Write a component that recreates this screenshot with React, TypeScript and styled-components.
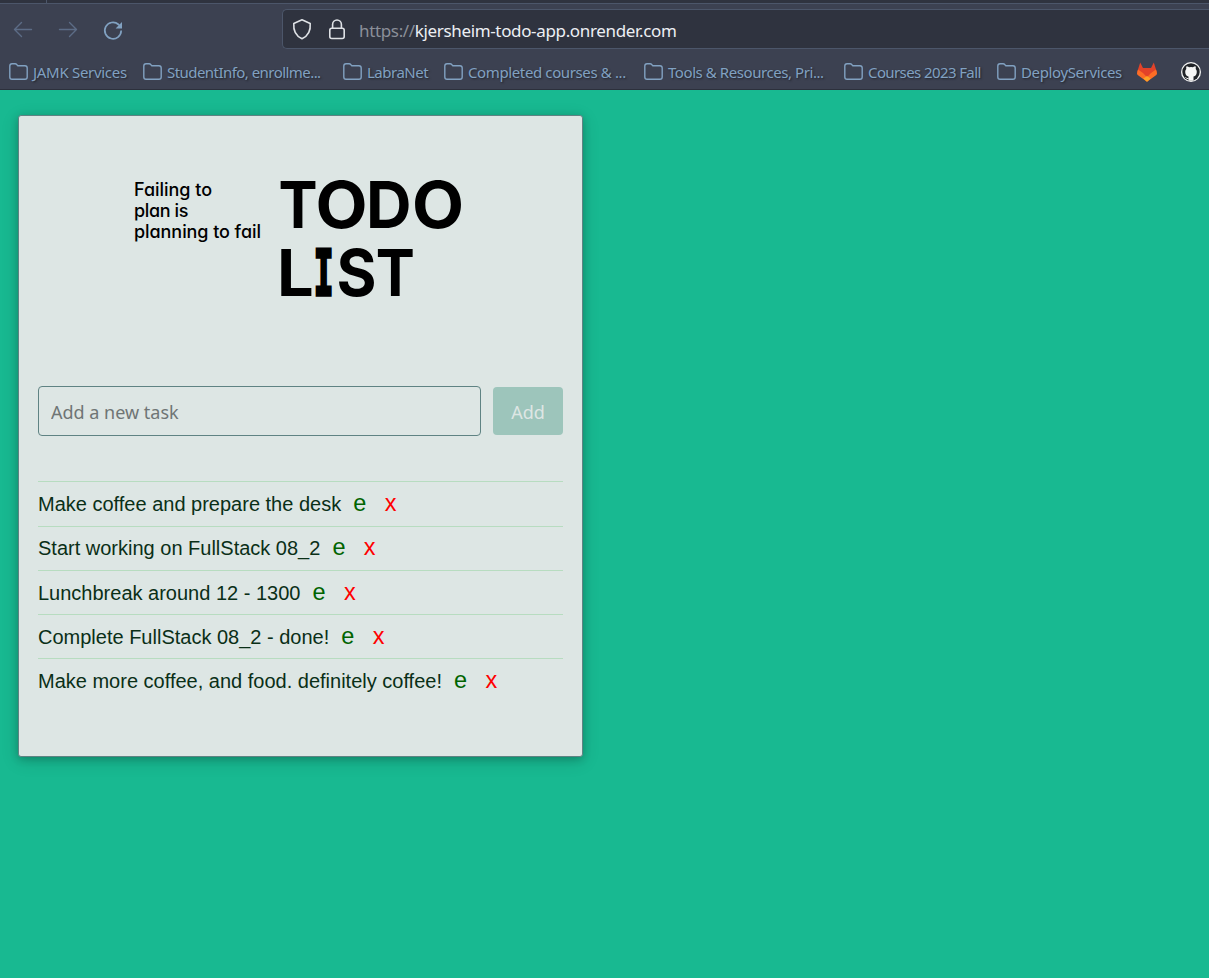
import React from "react";
import styled, { createGlobalStyle } from "styled-components";

const Global = createGlobalStyle`
  * { box-sizing: border-box; }
  html, body { margin: 0; padding: 0; background: #18b991; }
  body { overflow: hidden; font-family: "Liberation Sans", Arial, sans-serif; }
`;

const Window = styled.div`
  height: 978px;
  display: flex;
  flex-direction: column;
  overflow: hidden;
`;

const Chrome = styled.header`
  height: 90px;
  flex: none;
  background: #3c4151;
  border-bottom: 1px solid #2c303c;
  font-family: "Noto Sans", "Open Sans", sans-serif;
`;

const TabStrip = styled.div`
  height: 4px;
  background: #2f333f;
  border-bottom: 1px solid #4c566a;
`;

const Tab = styled.div`
  width: 47px;
  height: 3px;
  border-right: 1px solid #4c566a;
`;

const NavRow = styled.div`
  height: 50px;
  padding-top: 5px;
  display: flex;
`;

const NavButtons = styled.div`
  width: 282px;
  height: 40px;
  padding: 2px 0 0 11px;
  display: flex;
  align-items: center;
  gap: 21px;
`;

const AddressBar = styled.div`
  flex: 1;
  height: 40px;
  display: flex;
  align-items: center;
  background: #2f333f;
  border: 1px solid #4c566a;
  border-right: 0;
  border-radius: 5px 0 0 5px;
  padding-left: 7px;
`;

const BarIcon = styled.svg`
  width: 24px;
  height: 24px;
  margin-right: 11px;
  flex: none;
`;

const Url = styled.div`
  margin: 3px 0 0 -1px;
  font-size: 17px;
  line-height: 24px;
  letter-spacing: -0.35px;
  color: #eceff4;
  white-space: nowrap;
`;

const Scheme = styled.span`
  color: #8b8f99;
`;

const Bookmarks = styled.nav`
  height: 35px;
  padding-left: 9px;
  display: flex;
  align-items: center;
`;

const Bookmark = styled.div`
  display: flex;
  align-items: center;
  gap: 5px;
  margin-right: 16px;
`;

const BookmarkLabel = styled.span<{ $width: number; $spacing: number }>`
  width: ${(p) => p.$width}px;
  font-size: 15px;
  line-height: 20px;
  letter-spacing: ${(p) => p.$spacing}px;
  white-space: nowrap;
  color: #81a1c1;
  text-shadow: 1px 1px 2px #20232c;
  padding-top: 1px;
`;

const SiteIcon = styled.svg`
  flex: none;
  margin: 0 25px 0 -1px;
`;

const Page = styled.main`
  flex: 1;
  padding: 25px 0 0 18px;
`;

const Card = styled.section`
  width: 565px;
  height: 642px;
  padding: 0 19px;
  background: #dde6e4;
  border: 1px solid #5f8383;
  border-radius: 3px;
  box-shadow: 0 2px 8px rgba(0, 0, 0, 0.2), 0 4px 18px rgba(0, 0, 0, 0.14);
`;

const Banner = styled.svg`
  display: block;
  width: 525px;
  height: 270px;
`;

const Slogan = styled.g`
  font: 500 18px Inter, sans-serif;
  font-feature-settings: "cv11";
`;

const Title = styled.g`
  font: 700 65px Inter, sans-serif;
`;

const SlabLetter = styled.text`
  font: 700 62px "DejaVu Sans Mono", monospace;
  stroke: #000;
  stroke-width: 2.6px;
  vector-effect: non-scaling-stroke;
`;

const TaskForm = styled.form`
  display: flex;
  align-items: center;
  gap: 12px;
  margin-bottom: 45.25px;
`;

const TaskInput = styled.input`
  width: 443px;
  height: 50px;
  padding: 2px 12px 0;
  border: 1px solid #5f8383;
  border-radius: 4px;
  background: transparent;
  font: 18px "Noto Sans", sans-serif;
  &::placeholder { color: #6f7575; opacity: 1; }
`;

const AddButton = styled.button`
  width: 70px;
  height: 48px;
  padding: 2px 0 0;
  border: 0;
  border-radius: 4px;
  background: #9dc5bb;
  color: #dde6e4;
  font: 18px "Noto Sans", sans-serif;
`;

const Tasks = styled.ul`
  list-style: none;
  margin: 0;
  padding: 0;
`;

const Task = styled.li`
  height: 44.25px;
  display: flex;
  align-items: baseline;
  border-top: 1px solid #b7dcc0;
  padding-top: 6.9px;
  font-size: 20px;
  line-height: 28px;
  color: #0a2f17;
  white-space: nowrap;
`;

const Action = styled.span<{ $color: string; $gap: number }>`
  margin-left: ${(p) => p.$gap}px;
  font-size: 23.5px;
  color: ${(p) => p.$color};
`;

const bookmarks = [
  { label: "JAMK Services", width: 94, spacing: -0.3 },
  { label: "StudentInfo, enrollme...", width: 160, spacing: -0.55 },
  { label: "LabraNet", width: 61, spacing: -0.5 },
  { label: "Completed courses & ...", width: 160, spacing: -0.38 },
  { label: "Tools & Resources, Pri...", width: 160, spacing: -0.43 },
  { label: "Courses 2023 Fall", width: 113, spacing: -0.6 },
  { label: "DeployServices", width: 101, spacing: -0.38 },
];

const tasks = [
  "Make coffee and prepare the desk",
  "Start working on FullStack 08_2",
  "Lunchbreak around 12 - 1300",
  "Complete FullStack 08_2 - done!",
  "Make more coffee, and food. definitely coffee!",
];

const Folder = () => (
  <svg width="19" height="18" viewBox="0 0 19 18" fill="none" stroke="#81a1c1" strokeWidth="1.4">
    <path d="M.8 14V3Q.8.8 3 .8h3.2q.9 0 1.5.7l1.1 1.2h7.2q2.2 0 2.2 2.2V14q0 2.2-2.2 2.2H3Q.8 16.2.8 14Z" />
  </svg>
);

const Arrow = ({ flip }: { flip?: boolean }) => (
  <svg width="24" height="24" viewBox="0 0 24 24" fill="none" stroke="#5c6c86" strokeWidth="1.4" strokeLinecap="round" strokeLinejoin="round">
    <path d={flip ? "M3.5 11.5h17M13.5 4.5l7 7-7 7" : "M20.5 11.5h-17M10.5 4.5l-7 7 7 7"} />
  </svg>
);

const Letter = ({ x, y, scale, children }: { x: number; y: number; scale: number; children: string }) => (
  <text transform={`translate(${x} ${y}) scale(${scale} 1)`}>{children}</text>
);

export default function App() {
  return (
    <Window>
      <Global />
      <Chrome>
        <TabStrip><Tab /></TabStrip>
        <NavRow>
          <NavButtons>
            <Arrow />
            <Arrow flip />
            <svg width="24" height="24" viewBox="0 0 24 24" fill="none">
              <path d="M20.2 12.6A8.2 8.2 0 1 1 17.5 6.5L20 9" stroke="#81a1c1" strokeWidth="1.7" />
              <path d="M21 4v6.4h-6.4Z" fill="#81a1c1" />
            </svg>
          </NavButtons>
          <AddressBar>
            <BarIcon viewBox="0 0 24 24" fill="none" stroke="#dfe2e6" strokeWidth="1.6" strokeLinejoin="round">
              <path d="M12 2.8 20.2 6.4c.5 5.7-1.5 12.3-8.2 15.4C5.3 18.7 3.3 12.1 3.8 6.4Z" />
            </BarIcon>
            <BarIcon viewBox="0 0 24 24" fill="none" stroke="#dfe2e6" strokeWidth="1.6">
              <rect x="4.8" y="11.3" width="14.4" height="10.2" rx="2" />
              <path d="M7.6 11.2V7.4a4.4 4.4 0 0 1 8.8 0v3.8" />
            </BarIcon>
            <Url><Scheme>https://</Scheme>kjersheim-todo-app.onrender.com</Url>
          </AddressBar>
        </NavRow>
        <Bookmarks>
          {bookmarks.map((b) => (
            <Bookmark key={b.label}>
              <Folder />
              <BookmarkLabel $width={b.width} $spacing={b.spacing}>{b.label}</BookmarkLabel>
            </Bookmark>
          ))}
          <SiteIcon width="20" height="20" viewBox="0 0 20 20">
            <path d="M3.2.4 6 6h8L16.8.4 19.8 10 10 19.6.2 10Z" fill="#e24329" />
            <path d="M0 11 1 7.6 6 11l4 4.2 4-4.2 5-3.4 1 3.4q.1 1.5-1 2.3L10 19.8 1 13.3Q-.1 12.5 0 11Z" fill="#fc6d26" />
            <path d="m6.3 16.6 3.7-2.6 3.7 2.6-3.7 3.2Z" fill="#fca326" />
          </SiteIcon>
          <SiteIcon width="20" height="20" viewBox="0 0 20 20">
            <circle cx="10" cy="10" r="10" fill="#f5f5f5" />
            <circle cx="10" cy="10" r="8.7" fill="#202328" />
            <path d="M7.5 18.5v-4Q4.2 13.8 4.2 9.7q0-1.7 1.1-2.8-.4-1.3.2-2.7 1.3 0 2.6 1 1.9-.5 3.8 0 1.3-1 2.6-1 .6 1.4.2 2.7 1.1 1.1 1.1 2.8 0 4.1-3.3 4.8v4Q10 19.1 7.5 18.5Z" fill="#f5f5f5" />
            <path d="M7.5 16.6q-2.1.4-3-1.4" stroke="#f5f5f5" fill="none" />
          </SiteIcon>
        </Bookmarks>
      </Chrome>
      <Page>
        <Card>
          <Banner viewBox="38 116 525 270">
            <Slogan>
              <text x="134" y="195.5" textLength="78">Failing to</text>
              <text x="134" y="216.5" textLength="54.5">plan is</text>
              <text x="134" y="237.5" textLength="127">planning to fail</text>
            </Slogan>
            <Title>
              <Letter x={278.5} y={227.5} scale={0.9}>T</Letter>
              <Letter x={315.5} y={227.5} scale={1.04}>O</Letter>
              <Letter x={366} y={227.5} scale={0.97}>D</Letter>
              <Letter x={412} y={227.5} scale={1.04}>O</Letter>
              <Letter x={277} y={295.5} scale={1}>L</Letter>
              <SlabLetter transform="translate(313.7 294.6) scale(0.53 1)">I</SlabLetter>
              <Letter x={336.5} y={295.5} scale={0.94}>S</Letter>
              <Letter x={375.8} y={295.5} scale={0.9}>T</Letter>
            </Title>
          </Banner>
          <TaskForm>
            <TaskInput placeholder="Add a new task" />
            <AddButton type="button">Add</AddButton>
          </TaskForm>
          <Tasks>
            {tasks.map((t) => (
              <Task key={t}>
                <span>{t}</span>
                <Action $color="#006400" $gap={12}>e</Action>
                <Action $color="#ff0000" $gap={18.4}>x</Action>
              </Task>
            ))}
          </Tasks>
        </Card>
      </Page>
    </Window>
  );
}
